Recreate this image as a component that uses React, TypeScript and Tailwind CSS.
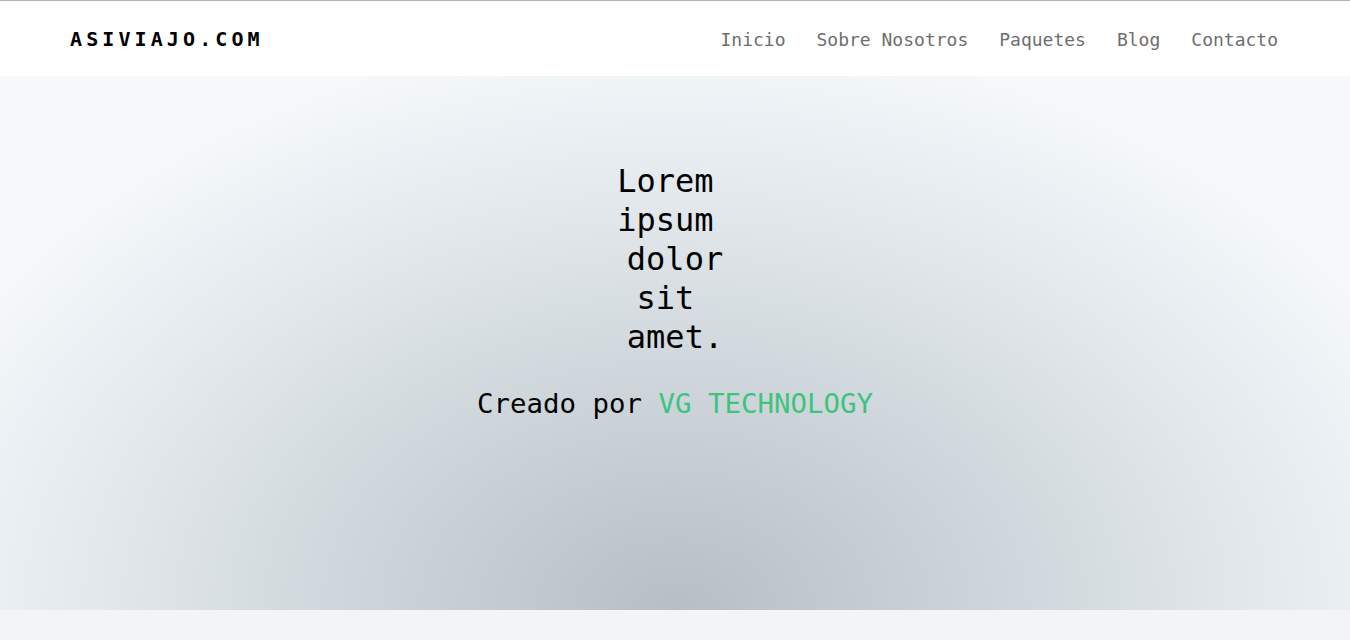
export default function App() {
  const links = ['Inicio', 'Sobre Nosotros', 'Paquetes', 'Blog', 'Contacto'];
  const lines = ['Lorem ', 'ipsum ', ' dolor ', 'sit ', ' amet. '];

  return (
    <div className="min-h-[640px] bg-[#f3f4f6] font-['DejaVu_Sans_Mono',monospace]">
      <header className="flex h-[76px] items-center justify-between border-t border-[#b4b4b4] bg-white pl-[70px] pr-[72px]">
        <div className="text-[20px] font-bold tracking-[4.1px] text-black">ASIVIAJO.COM</div>
        <nav className="flex gap-[31px] pt-[2px] text-[18px] text-[#6e6e6e]">
          {links.map((l) => (
            <a key={l} href="#" className="hover:text-black">
              {l}
            </a>
          ))}
        </nav>
      </header>

      <section className="h-[534px] bg-[radial-gradient(ellipse_820px_580px_at_50%_100%,#b5bfc5_0%,#f5f9fc_100%)] pt-[86px]">
        <h1 className="text-center text-[32px] leading-[39px] text-black">
          {lines.map((l, i) => (
            <span key={i} className="block whitespace-pre">
              {l}
            </span>
          ))}
        </h1>
        <p className="mt-[31px] text-center text-[27.4px] leading-[1.2] text-black">
          Creado por <span className="text-[#3cc47c]">VG TECHNOLOGY</span>
        </p>
      </section>
    </div>
  );
}
